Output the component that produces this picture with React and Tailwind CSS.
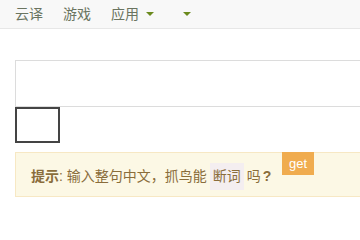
import React from "react";

function Caret() {
  return (
    <span className="inline-block w-0 h-0 border-l-[4px] border-r-[4px] border-t-[4px] border-l-transparent border-r-transparent border-t-[#6b8a1e]" />
  );
}

export default function App() {
  return (
    <div className="w-[360px] h-[240px] bg-white overflow-hidden font-['Liberation_Sans','Noto_Sans_CJK_SC',sans-serif]">
      <nav className="h-[29px] bg-[#f8f8f8] border-b border-[#e7e7e7] flex items-center pl-[15px] text-[14px] text-[#6a7460]">
        <span>云译</span>
        <span className="ml-[20px]">游戏</span>
        <span className="ml-[20px] flex items-center gap-[7px]">
          应用 <Caret />
        </span>
        <span className="ml-[29px] flex items-center">
          <Caret />
        </span>
      </nav>

      <div className="pl-[15px] pt-[31px]">
        <div className="h-[47px] border border-[#dcdcdc] border-r-0 bg-white" />
        <div className="w-[45px] h-[36px] border-2 border-[#444]" />
      </div>

      <div className="ml-[15px] mt-[9px] relative h-[45px] bg-[#fcf8e5] border border-[#f7e8c4] border-r-0 flex items-center pl-[15px] pt-[3px] text-[14px] text-[#8a6d3b]">
        <b className="font-bold">提示</b>
        <span>: 输入整句中文，抓鸟能</span>
        <span className="bg-[#f4eef0] px-[3px] mx-[3px] py-[3px]">断词</span>
        <span>吗</span>
        <span className="ml-[2px] font-bold">?</span>
        <button className="absolute left-[266px] top-[-1px] w-[32px] h-[23px] bg-[#f0ac4f] text-white text-[13px] leading-none">
          get
        </button>
      </div>
    </div>
  );
}
